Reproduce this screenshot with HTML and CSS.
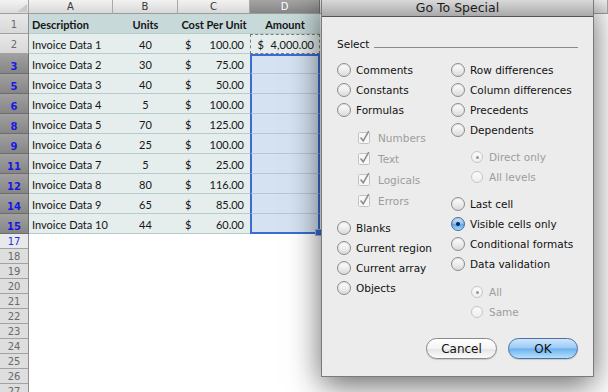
FILE: index.html
```html
<!DOCTYPE html>
<html lang="en">
<head>
<meta charset="UTF-8">
<title>Go To Special</title>
<link rel="stylesheet" href="styles.css">
</head>
<body>

<div class="sheet">
    <div class="corner"><svg width="14" height="10" viewBox="0 0 14 10"><polygon points="13,1 13,9 3,9" fill="#c9c9c9"/></svg></div>
    <div class="colhead">A</div>
    <div class="colhead">B</div>
    <div class="colhead">C</div>
    <div class="colhead picked">D</div>
    <div class="colhead"></div>

    <div class="rh">1</div>
    <div class="cell top left">Description</div>
    <div class="cell top">Units</div>
    <div class="cell top">Cost Per Unit</div>
    <div class="cell top">Amount</div>
    <div class="blank"></div>

    <div class="rh">2</div>
    <div class="cell left">Invoice Data 1</div>
    <div class="cell">40</div>
    <div class="cell money"><span>$</span><span>100.00</span></div>
    <div class="cell copied">$ 4,000.00</div>
    <div class="blank"></div>

    <div class="rh on">3</div>
    <div class="cell left">Invoice Data 2</div>
    <div class="cell">30</div>
    <div class="cell money"><span>$</span><span>75.00</span></div>
    <div class="cell sel first"></div>
    <div class="blank"></div>

    <div class="rh on">5</div>
    <div class="cell left">Invoice Data 3</div>
    <div class="cell">40</div>
    <div class="cell money"><span>$</span><span>50.00</span></div>
    <div class="cell sel"></div>
    <div class="blank"></div>

    <div class="rh on">6</div>
    <div class="cell left">Invoice Data 4</div>
    <div class="cell">5</div>
    <div class="cell money"><span>$</span><span>100.00</span></div>
    <div class="cell sel"></div>
    <div class="blank"></div>

    <div class="rh on">8</div>
    <div class="cell left">Invoice Data 5</div>
    <div class="cell">70</div>
    <div class="cell money"><span>$</span><span>125.00</span></div>
    <div class="cell sel"></div>
    <div class="blank"></div>

    <div class="rh on">9</div>
    <div class="cell left">Invoice Data 6</div>
    <div class="cell">25</div>
    <div class="cell money"><span>$</span><span>100.00</span></div>
    <div class="cell sel"></div>
    <div class="blank"></div>

    <div class="rh on">11</div>
    <div class="cell left">Invoice Data 7</div>
    <div class="cell">5</div>
    <div class="cell money"><span>$</span><span>25.00</span></div>
    <div class="cell sel"></div>
    <div class="blank"></div>

    <div class="rh on">12</div>
    <div class="cell left">Invoice Data 8</div>
    <div class="cell">80</div>
    <div class="cell money"><span>$</span><span>116.00</span></div>
    <div class="cell sel"></div>
    <div class="blank"></div>

    <div class="rh on">14</div>
    <div class="cell left">Invoice Data 9</div>
    <div class="cell">65</div>
    <div class="cell money"><span>$</span><span>85.00</span></div>
    <div class="cell sel"></div>
    <div class="blank"></div>

    <div class="rh on">15</div>
    <div class="cell left">Invoice Data 10</div>
    <div class="cell">44</div>
    <div class="cell money"><span>$</span><span>60.00</span></div>
    <div class="cell sel last"><span class="handle"></span></div>
    <div class="blank"></div>

    <div class="rh small blue">17</div><div class="empty"></div>
    <div class="rh small">18</div><div class="empty"></div>
    <div class="rh small">19</div><div class="empty"></div>
    <div class="rh small">20</div><div class="empty"></div>
    <div class="rh small">21</div><div class="empty"></div>
    <div class="rh small">22</div><div class="empty"></div>
    <div class="rh small">23</div><div class="empty"></div>
    <div class="rh small">24</div><div class="empty"></div>
    <div class="rh small">25</div><div class="empty"></div>
    <div class="rh small">26</div><div class="empty"></div>
    <div class="rh small">27</div><div class="empty"></div>
</div>

<div class="dialog">
    <div class="titlebar">Go To Special</div>
    <div class="dlg-body">
        <div class="legend"><span>Select</span><span class="rule"></span></div>

        <div class="cols">
            <div class="col one">
                <div class="opt"><span class="radio"></span>Comments</div>
                <div class="opt"><span class="radio"></span>Constants</div>
                <div class="opt"><span class="radio"></span>Formulas</div>

                <div class="sub checks">
                    <div class="opt off"><span class="check"><svg width="14" height="14" viewBox="0 0 14 14"><rect x="0.5" y="2.5" width="11" height="11" rx="1" fill="#f7f7f7" stroke="#c3c3c3"/><path d="M2.6 7.6 L5.2 10.8 L10.8 1.2" fill="none" stroke="#8e8e8e" stroke-width="1.6"/></svg></span>Numbers</div>
                    <div class="opt off"><span class="check"><svg width="14" height="14" viewBox="0 0 14 14"><rect x="0.5" y="2.5" width="11" height="11" rx="1" fill="#f7f7f7" stroke="#c3c3c3"/><path d="M2.6 7.6 L5.2 10.8 L10.8 1.2" fill="none" stroke="#8e8e8e" stroke-width="1.6"/></svg></span>Text</div>
                    <div class="opt off"><span class="check"><svg width="14" height="14" viewBox="0 0 14 14"><rect x="0.5" y="2.5" width="11" height="11" rx="1" fill="#f7f7f7" stroke="#c3c3c3"/><path d="M2.6 7.6 L5.2 10.8 L10.8 1.2" fill="none" stroke="#8e8e8e" stroke-width="1.6"/></svg></span>Logicals</div>
                    <div class="opt off"><span class="check"><svg width="14" height="14" viewBox="0 0 14 14"><rect x="0.5" y="2.5" width="11" height="11" rx="1" fill="#f7f7f7" stroke="#c3c3c3"/><path d="M2.6 7.6 L5.2 10.8 L10.8 1.2" fill="none" stroke="#8e8e8e" stroke-width="1.6"/></svg></span>Errors</div>
                </div>

                <div class="group">
                    <div class="opt"><span class="radio"></span>Blanks</div>
                    <div class="opt"><span class="radio"></span>Current region</div>
                    <div class="opt"><span class="radio"></span>Current array</div>
                    <div class="opt"><span class="radio"></span>Objects</div>
                </div>
            </div>

            <div class="col two">
                <div class="opt"><span class="radio"></span>Row differences</div>
                <div class="opt"><span class="radio"></span>Column differences</div>
                <div class="opt"><span class="radio"></span>Precedents</div>
                <div class="opt"><span class="radio"></span>Dependents</div>

                <div class="sub">
                    <div class="opt off"><span class="radio mini dot"></span>Direct only</div>
                    <div class="opt off"><span class="radio mini"></span>All levels</div>
                </div>

                <div class="group">
                    <div class="opt"><span class="radio"></span>Last cell</div>
                    <div class="opt"><span class="radio checked"></span>Visible cells only</div>
                    <div class="opt"><span class="radio"></span>Conditional formats</div>
                    <div class="opt"><span class="radio"></span>Data validation</div>
                </div>

                <div class="sub">
                    <div class="opt off"><span class="radio mini dot"></span>All</div>
                    <div class="opt off"><span class="radio mini"></span>Same</div>
                </div>
            </div>
        </div>

        <div class="buttons">
            <button class="btn">Cancel</button>
            <button class="btn default">OK</button>
        </div>
    </div>
</div>

</body>
</html>
```

FILE: styles.css
```css
html, body {
    margin: 0;
    padding: 0;
    width: 608px;
    height: 392px;
    overflow: hidden;
    background-color: #fff;
}
body {
    position: relative;
    font-family: "Lato", "Liberation Sans", sans-serif;
}

/* spreadsheet */
.sheet {
    display: grid;
    grid-template-columns: 29px 84px 65px 72px 70px 1fr;
    grid-template-rows: 14px repeat(11, 20px) repeat(11, 15px);
}
.sheet > div {
    box-sizing: border-box;
}
.corner {
    background: linear-gradient(#f3f3f3, #dcdcdc);
    border-right: 1px solid #a4a4a4;
    border-bottom: 1px solid #9c9c9c;
    display: flex;
    justify-content: flex-end;
    align-items: flex-end;
}
.corner svg {
    display: block;
}
.colhead {
    background: linear-gradient(#f2f2f2, #d8d8d8);
    border-right: 1px solid #a8a8a8;
    border-bottom: 1px solid #9c9c9c;
    font-family: "DejaVu Sans", sans-serif;
    font-size: 10px;
    color: #3a3a3a;
    text-align: center;
    line-height: 13px;
}
.colhead.picked {
    background: linear-gradient(#a4a4a4, #868686);
    color: #fff;
    border-right-color: #6f6f6f;
}
.rh {
    background: linear-gradient(#e8e8e8, #d8d8d8);
    border-right: 1px solid #8e8e8e;
    border-bottom: 1px solid #a2a2a2;
    font-family: "DejaVu Sans", sans-serif;
    font-size: 10px;
    color: #6a6a6a;
    display: flex;
    align-items: center;
    justify-content: center;
    padding-top: 1px;
}
.rh.on {
    background: linear-gradient(#a0a0a0, #868686);
    border-bottom-color: #6c6c6c;
    border-right-color: #6c6c6c;
    color: #1818e0;
    font-weight: bold;
    align-items: flex-end;
    padding-bottom: 1px;
}
.rh.small {
    background: #dedede;
    padding-top: 0;
}
.rh.blue {
    background: #e9e9ec;
    color: #2035d8;
}
.cell {
    background-color: #e5eded;
    border-bottom: 1px solid #b7cbca;
    font-size: 11px;
    color: #151515;
    display: flex;
    align-items: center;
    justify-content: center;
    padding-top: 2px;
    white-space: nowrap;
}
.cell.top {
    background-color: #c7d9d9;
    font-weight: bold;
}
.cell.left {
    justify-content: flex-start;
    padding-left: 3px;
}
.cell.money {
    justify-content: space-between;
    padding: 2px 6px 0 7px;
}
.cell.copied {
    border: 1px dashed #7c7c7c;
    justify-content: flex-end;
    padding: 1px 5px 0 0;
    word-spacing: 4px;
}
.cell.sel {
    position: relative;
    background-color: #d5e2f1;
    border-left: 2px solid #3a6cd2;
    border-right: 2px solid #3a6cd2;
    border-bottom-color: #b6c7d9;
}
.cell.first {
    border-top: 2px solid #3a6cd2;
}
.cell.last {
    border-bottom: 2px solid #3a6cd2;
}
.handle {
    position: absolute;
    right: -4px;
    bottom: -4px;
    width: 5px;
    height: 5px;
    background-color: #3a6cd2;
    border: 1px solid #9cb8ea;
}
.blank, .empty {
    background-color: #fff;
}
.empty {
    grid-column: span 5;
}

/* dialog */
.dialog {
    position: absolute;
    left: 321px;
    top: 0;
    width: 273px;
    height: 377px;
    box-sizing: border-box;
    background-color: #ececec;
    border: 1px solid #7a7a7a;
    border-top: none;
    box-shadow: 0 8px 30px rgba(0, 0, 0, 0.6);
    font-family: "DejaVu Sans", sans-serif;
    font-size: 10.5px;
    color: #111;
}
.titlebar {
    height: 16px;
    line-height: 16px;
    border-bottom: 1px solid #555;
    background: linear-gradient(#d9d9d9, #a9a9a9);
    text-align: center;
    font-size: 12.5px;
    color: #1a1a1a;
}
.dlg-body {
    padding: 20px 15px 0 15px;
}
.legend {
    display: flex;
    align-items: center;
    height: 14px;
}
.rule {
    flex: 1;
    height: 1px;
    margin: 6px 0 0 5px;
    background-color: #8a8a8a;
}
.cols {
    display: flex;
    margin-top: 9px;
    height: 262px;
}
.col.one {
    width: 114px;
}
.opt {
    display: flex;
    align-items: center;
    gap: 5px;
    height: 20px;
    white-space: nowrap;
}
.opt.off {
    color: #9d9d9d;
    gap: 6px;
}
.sub {
    margin: 7px 0 0 20px;
}
.checks {
    margin-left: 21px;
}
.checks .opt {
    height: 21px;
}
.group {
    margin-top: 7px;
}
.col.two .sub:last-child {
    margin-top: 8px;
}
.radio {
    position: relative;
    flex: none;
    width: 14px;
    height: 14px;
    box-sizing: border-box;
    border-radius: 50%;
    border: 1px solid #8c8c8c;
    background: linear-gradient(#ffffff, #ececec 55%, #dadada);
    box-shadow: inset 0 1px 1px rgba(0, 0, 0, 0.12);
}
.radio.mini {
    width: 12px;
    height: 12px;
    border-color: #c6c6c6;
    background: linear-gradient(#fbfbfb, #eeeeee);
    box-shadow: none;
}
.radio.dot::after {
    content: "";
    position: absolute;
    left: 3.5px;
    top: 3.5px;
    width: 3px;
    height: 3px;
    border-radius: 50%;
    background-color: #9a9a9a;
}
.radio.checked {
    border-color: #4a6a9c;
    background: linear-gradient(#d4ebfd, #86bff3 50%, #5aa5ec 55%, #a9dafc);
}
.radio.checked::after {
    content: "";
    position: absolute;
    left: 4px;
    top: 4px;
    width: 4px;
    height: 4px;
    border-radius: 50%;
    background-color: #122240;
}
.check {
    flex: none;
    width: 14px;
    height: 14px;
    margin-top: -2px;
}
.check svg {
    display: block;
}
.buttons {
    display: flex;
    justify-content: flex-end;
    gap: 11px;
    margin-top: 16px;
    padding-right: 0;
}
.btn {
    height: 21px;
    padding: 0;
    border-radius: 11px;
    font-family: "DejaVu Sans", sans-serif;
    font-size: 12px;
    color: #111;
    border: 1px solid #8a8a8a;
    background: linear-gradient(#ffffff, #f4f4f4 50%, #e4e4e4 52%, #fbfbfb);
    box-shadow: 0 1px 1px rgba(0, 0, 0, 0.15);
    width: 71px;
}
.btn.default {
    width: 70px;
    border-color: #4d6fa6;
    background: linear-gradient(#cfe6fc, #98caf5 48%, #6cb0ef 52%, #b3e2fd);
}
```
